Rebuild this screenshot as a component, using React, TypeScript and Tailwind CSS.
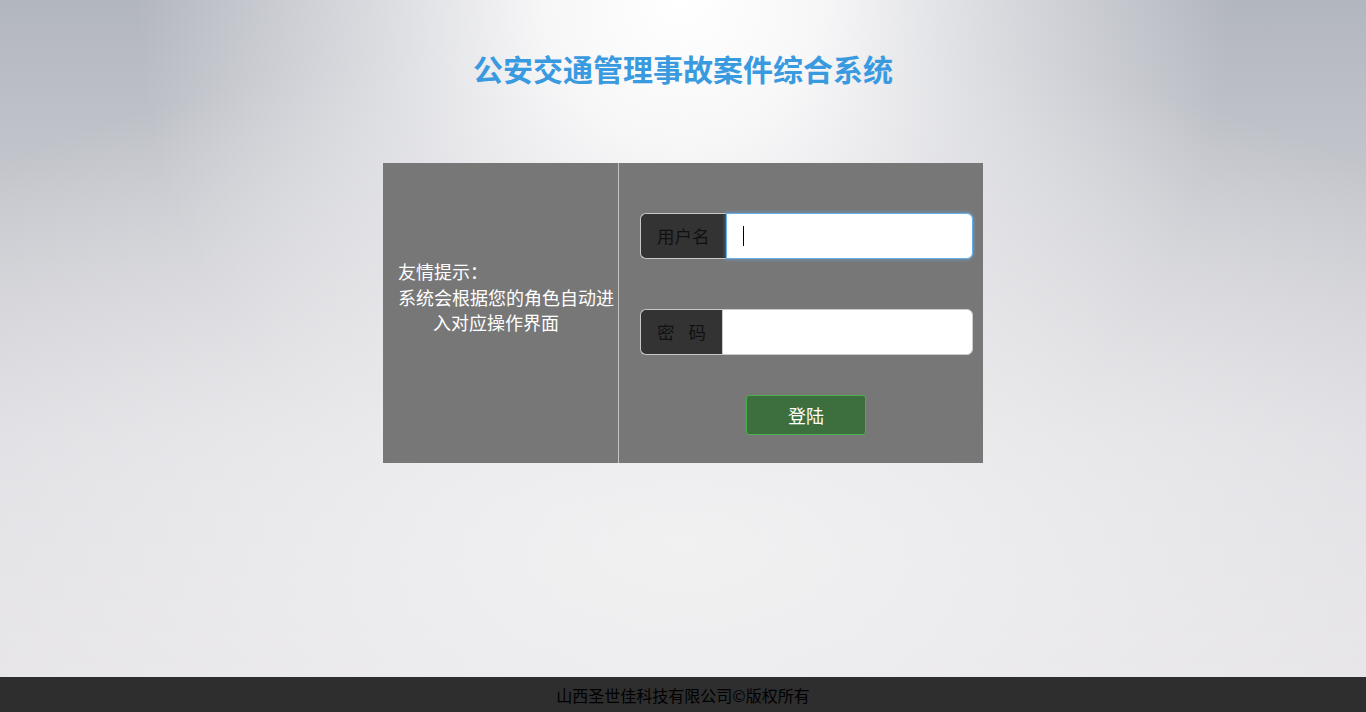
import React from "react";

export default function App() {
  return (
    <div
      className="w-full h-[712px] flex flex-col overflow-hidden"
      style={{ fontFamily: '"Noto Sans CJK SC", "Liberation Sans", sans-serif' }}
    >
      <main className="flex-1 flex flex-col items-center bg-[radial-gradient(ellipse_40%_85%_at_50%_0%,#ffffff_0%,#f7f7f8_25%,rgba(236,236,239,0.7)_55%,rgba(225,226,230,0)_100%),radial-gradient(ellipse_75%_75%_at_50%_80%,#f2f1f2_0%,rgba(238,237,239,0.6)_50%,rgba(230,229,232,0)_100%),linear-gradient(to_bottom,#b2b6be_0%,#c6c8ce_30%,#dbdadf_65%,#e4e2e6_100%)]">
        <h1 className="mt-[47px] text-[30px] leading-[42px] font-bold text-[#3a9ae0]">
          公安交通管理事故案件综合系统
        </h1>
        <div className="mt-[74px] w-[600px] h-[300px] flex bg-[#777777]">
          <div className="w-[235px] pt-[96px] pl-[15px] text-[18px] leading-[25.5px] text-white">
            <div>友情提示：</div>
            <div className="whitespace-nowrap">系统会根据您的角色自动进</div>
            <div className="pl-[35px]">入对应操作界面</div>
          </div>
          <div className="w-px bg-[#c4c4c4]" />
          <div className="flex-1 flex flex-col pt-[50px] pl-[21px] pr-[10px]">
            <div className="flex h-[46px]">
              <div className="flex items-center px-4 bg-[#333333] border border-[#c8c8c8] border-r-0 rounded-l-[6px] text-[17.5px] text-[#111111]">
                用户名
              </div>
              <div className="relative flex-1 bg-white border border-[#66afe9] rounded-r-[6px] shadow-[0_0_4px_rgba(102,175,233,0.7)]">
                <input className="w-full h-full bg-transparent outline-none px-4 text-[16px]" />
                <span className="absolute left-[16px] top-[12px] w-px h-[20px] bg-black" />
              </div>
            </div>
            <div className="flex h-[46px] mt-[50px]">
              <div className="flex items-center gap-[14px] px-4 bg-[#333333] border border-[#c8c8c8] border-r-0 rounded-l-[6px] text-[17.5px] text-[#111111]">
                <span>密</span>
                <span>码</span>
              </div>
              <div className="flex-1 bg-white border border-[#cccccc] rounded-r-[6px]">
                <input type="password" className="w-full h-full bg-transparent outline-none px-4" />
              </div>
            </div>
            <div className="flex mt-[40px] pl-[106px]">
              <button className="w-[120px] h-[40px] bg-[#3d6e3d] border border-[#4cae4c] rounded-[3px] text-white text-[18px]">
                登陆
              </button>
            </div>
          </div>
        </div>
      </main>
      <footer className="h-[35px] bg-[#2e2e2e] flex items-center justify-center text-[16px] text-black">
        山西圣世佳科技有限公司©版权所有
      </footer>
    </div>
  );
}
